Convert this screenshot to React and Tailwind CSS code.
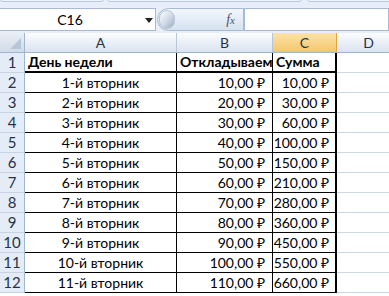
import React from "react";

const rows = [
  ["1-й вторник", "10,00 ₽", "10,00 ₽"],
  ["2-й вторник", "20,00 ₽", "30,00 ₽"],
  ["3-й вторник", "30,00 ₽", "60,00 ₽"],
  ["4-й вторник", "40,00 ₽", "100,00 ₽"],
  ["5-й вторник", "50,00 ₽", "150,00 ₽"],
  ["6-й вторник", "60,00 ₽", "210,00 ₽"],
  ["7-й вторник", "70,00 ₽", "280,00 ₽"],
  ["8-й вторник", "80,00 ₽", "360,00 ₽"],
  ["9-й вторник", "90,00 ₽", "450,00 ₽"],
  ["10-й вторник", "100,00 ₽", "550,00 ₽"],
  ["11-й вторник", "110,00 ₽", "660,00 ₽"],
];

const font = { fontFamily: "Lato, 'Liberation Sans', sans-serif" };

function RowHead({ n }) {
  return (
    <div className="w-[25px] h-[20px] shrink-0 flex items-end justify-center pb-[1px] bg-[#e4ecf7] border-r border-b border-r-[#9eb6ce] border-b-[#c5d3e3] text-[15px] text-[#27324a] leading-[18px]">
      {n}
    </div>
  );
}

export default function App() {
  return (
    <div className="w-[389px] h-[296px] overflow-hidden bg-white" style={font}>
      {/* top strip */}
      <div className="h-[8px] bg-[#e7eef8] relative">
        <div className="absolute left-0 top-[-6px] w-[104px] h-[8px] border border-[#b9c9dd] rounded-[3px] bg-[#eef3fa]" />
        <div className="absolute left-[107px] top-[-6px] w-[195px] h-[8px] border border-[#b9c9dd] rounded-[3px] bg-[#eef3fa]" />
        <div className="absolute left-[307px] top-[-6px] w-[100px] h-[8px] border border-[#b9c9dd] rounded-[3px] bg-[#eef3fa]" />
      </div>
      {/* name box / formula bar */}
      <div className="h-[25px] bg-[#e7eef8] flex">
        <div className="w-[156px] h-[23px] bg-white border-t border-b border-r border-[#a7bad3] flex items-center relative">
          <span className="w-[140px] text-center text-[14px] text-black">C16</span>
          <span className="absolute left-[145px] top-[9px] w-0 h-0 border-l-[4px] border-r-[4px] border-t-[5px] border-l-transparent border-r-transparent border-t-[#222]" />
        </div>
        <div className="relative w-[87px] h-[23px] ml-[1px] rounded-l-[12px] border border-[#a7bad3] bg-gradient-to-b from-[#f3f7fc] to-[#d6e2f1] flex items-center justify-end pr-[8px]">
          <div className="absolute left-[1px] top-[1px] w-[16px] h-[19px] rounded-full bg-gradient-to-br from-[#ffffff] via-[#d4dce8] to-[#9eadc2] border border-[#b7c5d8]" />
          <span className="text-[14px] italic text-[#4a5566]" style={{ fontFamily: "'Liberation Serif', serif" }}>
            f<span className="text-[11px]">x</span>
          </span>
        </div>
        <div className="flex-1 h-[23px] bg-white border border-[#a7bad3]" />
      </div>
      {/* column headers */}
      <div className="flex h-[20px] border-b border-[#9eb6ce]">
        <div className="w-[25px] shrink-0 bg-gradient-to-b from-[#e9eef6] to-[#d2dbe8] border-r border-[#9eb6ce] relative">
          <div className="absolute right-[3px] bottom-[3px] w-0 h-0" style={{ borderBottom: "11px solid #b7c5d8", borderLeft: "11px solid transparent" }} />
        </div>
        <div className="w-[152px] shrink-0 bg-gradient-to-b from-[#fbfcfe] to-[#dae3ef] border-r border-[#b8c6d9] flex items-center justify-center text-[14px] text-[#27324a]">A</div>
        <div className="w-[96px] shrink-0 bg-gradient-to-b from-[#fbfcfe] to-[#dae3ef] border-r border-[#b8c6d9] flex items-center justify-center text-[14px] text-[#27324a]">B</div>
        <div className="w-[64px] shrink-0 bg-gradient-to-b from-[#fbe3a8] to-[#f4c66a] border-r border-[#e0a73f] flex items-center justify-center text-[14px] text-[#27324a]">C</div>
        <div className="w-[64px] shrink-0 bg-gradient-to-b from-[#fbfcfe] to-[#dae3ef] border-r border-[#b8c6d9] flex items-center justify-center text-[14px] text-[#27324a]">D</div>
      </div>
      {/* row 1 */}
      <div className="flex h-[20px]">
        <RowHead n={1} />
        <div className="w-[152px] shrink-0 border-r border-black border-b-2 pl-[3px] flex items-end text-[14px] font-bold text-black leading-[18px] whitespace-nowrap">День недели</div>
        <div className="w-[96px] shrink-0 border-r border-black border-b-2 pl-[3px] flex items-end text-[14px] font-bold text-black leading-[18px] whitespace-nowrap overflow-hidden">Откладываем</div>
        <div className="w-[64px] shrink-0 border-r-2 border-black border-b-2 pl-[3px] flex items-end text-[14px] font-bold text-black leading-[18px] whitespace-nowrap">Сумма</div>
        <div className="w-[64px] shrink-0 border-r border-b border-[#d0d7e5]" />
      </div>
      {rows.map((r, i) => (
        <div key={i} className="flex h-[20px]">
          <RowHead n={i + 2} />
          <div className="w-[152px] shrink-0 border-r border-b border-black flex items-end justify-center text-[14px] text-black leading-[18px] whitespace-nowrap">{r[0]}</div>
          <div className="w-[96px] shrink-0 border-r border-b border-black flex items-end justify-end pr-[7px] text-[14px] text-black leading-[18px] whitespace-nowrap">{r[1]}</div>
          <div className="w-[64px] shrink-0 border-r-2 border-b border-black flex items-end justify-end pr-[6px] text-[14px] text-black leading-[18px] whitespace-nowrap">{r[2]}</div>
          <div className="w-[64px] shrink-0 border-r border-b border-[#d0d7e5]" />
        </div>
      ))}
    </div>
  );
}
